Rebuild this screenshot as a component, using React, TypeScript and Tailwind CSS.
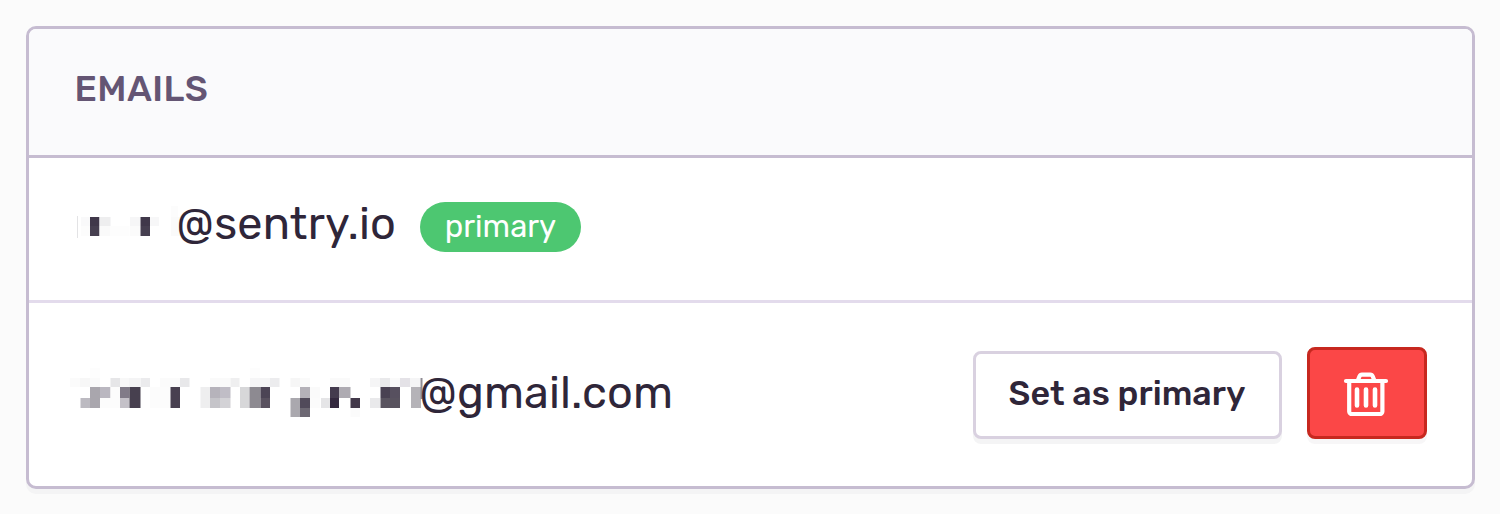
type Cell = [x: number, y: number, w: number, h: number, fill: string];

const firstMask: Cell[] = [
  [1, 7, 1, 22, "#e3e3e5"],
  [5, 8, 9, 9, "#f9f9fa"],
  [5, 17, 9, 10, "#fcfcfc"],
  [14, 8, 9.5, 9, "#40384a"],
  [14, 17, 9.5, 10, "#463f50"],
  [23.5, 8, 11, 9, "#eeeeef"],
  [23.5, 17, 11, 10, "#fafafa"],
  [34.5, 17, 19, 10, "#fdfdfd"],
  [54, 8, 10, 9, "#f6f6f7"],
  [54, 17, 10, 10, "#fbfbfb"],
  [64.5, 8, 9.5, 9, "#40384a"],
  [64.5, 17, 9.5, 10, "#463f50"],
  [74, 8, 9, 9, "#f7f7f8"],
  [95, -3, 7, 11, "#fcfcfc"],
  [95, 8, 9, 19, "#fafafa"],
];

const secondMask: Cell[] = [
  [0, 10, 10, 9, "#fbfbfb"],
  [10, 10, 10, 9, "#f7f7f7"],
  [20, 0, 10, 10, "#fdfdfd"],
  [20, 10, 10, 9, "#fafafa"],
  [40.5, 10, 9.5, 9, "#e6e6e8"],
  [50, 10, 9, 9, "#f8f8f8"],
  [59, 10, 11, 9, "#f4f4f5"],
  [70.5, 10, 9.5, 9, "#ebebed"],
  [90, 10, 20, 9, "#fbfbfb"],
  [110, 10, 9.5, 9, "#e8e8ea"],
  [140, 10, 20.5, 9, "#fafafa"],
  [160.5, 10, 9, 9, "#efeff0"],
  [180, 0, 10, 10, "#fdfdfd"],
  [180, 10, 20, 9, "#f5f5f6"],
  [200, 10, 9.5, 9, "#ececee"],
  [220.5, 10, 9.5, 9, "#f6f6f6"],
  [230, 10, 10, 9, "#fafafa"],
  [260, 10, 20, 9, "#fafafa"],
  [300, 10, 10, 9, "#f5f5f6"],
  [310, 10, 10, 9, "#e9e9eb"],
  [320, 10, 10, 9, "#fafafa"],
  [330, 10, 10, 9, "#e4e2e7"],
  [340, 10, 10, 9, "#f5f5f6"],
  [10.5, 30, 9.5, 10, "#bcbac1"],
  [20, 19, 10, 21, "#a9a6ad"],
  [30, 19, 10.5, 11, "#bab7c0"],
  [30, 30, 20, 10, "#fcfcfc"],
  [40.5, 19, 9.5, 11, "#fcfcfc"],
  [50, 19, 9.5, 11, "#817b88"],
  [50, 30, 9.5, 10, "#c4c1c8"],
  [59.5, 19, 11, 21, "#47404f"],
  [80, 19, 20, 21, "#fcfcfc"],
  [100.5, 19, 9.5, 21, "#484050"],
  [130.5, 19, 9.5, 21, "#eeeeef"],
  [140, 19, 10, 11, "#b6b3bb"],
  [150, 19, 10.5, 11, "#c0bdc6"],
  [140, 30, 10, 10, "#c5c4c9"],
  [150, 30, 10.5, 10, "#d3d2d6"],
  [170, 19, 9.5, 21, "#d7d7d9"],
  [179.5, 19, 11, 21, "#8d8a91"],
  [190.5, 19, 9.5, 11, "#4c4455"],
  [190.5, 30, 9.5, 10, "#59515f"],
  [230, 19, 10, 11, "#b4b1b8"],
  [240, 19, 10, 11, "#fafafa"],
  [220.5, 30, 9.5, 19, "#aaa8ae"],
  [230, 30, 10, 10, "#514a5a"],
  [230, 40, 10, 9, "#6d6873"],
  [240, 30, 10, 10, "#fbfbfb"],
  [251, 30, 9, 10, "#e5e5e7"],
  [260, 19, 9, 11, "#443b4e"],
  [260, 30, 9, 10, "#34293f"],
  [269, 19, 11.5, 11, "#aeabb2"],
  [280.5, 30, 9.5, 10, "#423849"],
  [280.5, 40, 9.5, 9, "#fbfbfb"],
  [300, 30, 10, 10, "#e9e9eb"],
  [310.5, 19, 9.5, 11, "#494152"],
  [310.5, 30, 19.5, 10, "#59535f"],
  [320, 19, 10, 11, "#57505f"],
  [341, 19, 10, 21, "#b5b3b8"],
  [350.5, 10, 2, 21, "#8f8c94"],
];

function Mask({ cells, className }: { cells: Cell[]; className: string }) {
  return (
    <svg className={className} overflow="visible" aria-hidden="true">
      {cells.map(([x, y, w, h, fill], i) => (
        <rect key={i} x={x} y={y} width={w} height={h} fill={fill} />
      ))}
    </svg>
  );
}

function TrashIcon() {
  return (
    <svg
      className="h-[46px] w-[46px]"
      viewBox="0 0 46 46"
      fill="none"
      stroke="#fff"
      strokeWidth="4.2"
      strokeLinecap="round"
      strokeLinejoin="round"
      aria-hidden="true"
    >
      <path d="M3 11H43" />
      <path d="M6.200 11V41.500a2.600 2.600 0 0 0 2.600 2.600H36.800a2.600 2.600 0 0 0 2.600-2.600V11" />
      <path d="M15 10L16.500 6.200a2.600 2.600 0 0 1 2.400-1.600H27.300a2.600 2.600 0 0 1 2.400 1.600L31.200 10" />
      <path strokeWidth="4.600" d="M14 19.500V35.500M23 19.500V35.500M32 19.500V35.500" />
    </svg>
  );
}

export default function App() {
  return (
    <div className="h-[514px] w-full bg-[#fbfbfb] px-[25.5px] pt-[25.5px] font-['Rubik','Roboto',sans-serif] text-[#2f2639]">
      <section className="flex h-[463px] flex-col overflow-hidden rounded-[10px] border-[3px] border-[#c6bcd1] bg-white shadow-[0_5px_0_rgba(43,34,51,0.03)]">
        <header className="flex h-[129px] shrink-0 items-center border-b-[3px] border-[#c6bcd1] bg-[#fafafc] pb-[5px] pl-[46px]">
          <h2 className="text-[36px] leading-[42px] font-medium tracking-[0.4px] text-[#645574]">EMAILS</h2>
        </header>
        <div className="flex h-[145px] shrink-0 items-center border-b-[3px] border-[#e3dbec] pb-[3px] pl-[47px]">
          <Mask cells={firstMask} className="h-[36px] w-[101px] shrink-0" />
          <span className="w-[243px] pb-[6px] text-[45px] leading-[50px] tracking-[0.2px]">@sentry.io</span>
          <span className="flex h-[50px] w-[161px] items-center justify-center rounded-full bg-[#4dc771] pb-[1px] pl-[1px] text-[31px] leading-[36px] text-white">
            primary
          </span>
        </div>
        <div className="flex flex-1 items-center pr-[45px] pb-[2px] pl-[41px]">
          <Mask cells={secondMask} className="h-[50px] w-[350px] shrink-0" />
          <span className="pb-[1px] text-[45px] leading-[50px] tracking-[0.1px]">@gmail.com</span>
          <div className="ml-auto flex items-center gap-[25px]">
            <div className="pt-[3px]">
              <button className="flex h-[88px] w-[309px] items-center justify-center rounded-[8px] border-[3px] border-[#d9d1e0] bg-white pb-[2px] text-[34px] leading-[40px] font-medium shadow-[0_5px_0_rgba(43,34,51,0.05)]">
                Set as primary
              </button>
            </div>
            <button
              aria-label="Remove email"
              className="flex h-[92px] w-[120px] items-center justify-center rounded-[8px] border-[3px] border-[#c7281f] bg-[#fb4747] pr-[2px] shadow-[0_5px_0_rgba(43,34,51,0.04)]"
            >
              <TrashIcon />
            </button>
          </div>
        </div>
      </section>
    </div>
  );
}
